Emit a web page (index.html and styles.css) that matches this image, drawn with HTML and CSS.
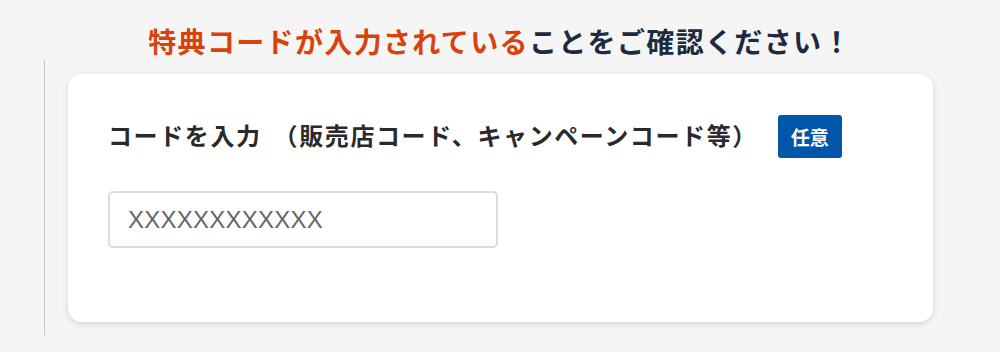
FILE: index.html
```html
<!DOCTYPE html>
<html lang="ja">
<head>
    <meta charset="UTF-8">
    <meta name="viewport" content="width=device-width, initial-scale=1.0">
    <title>特典コード入力</title>
    <link rel="stylesheet" href="styles.css">
</head>
<body>

    <h1 class="notice"><span class="accent">特典コードが入力されている</span>ことをご確認ください！</h1>

    <div class="section">
        <div class="card">
            <div class="field-head">
                <label class="field-label" for="codeInput">コードを入力<span class="note">（販売店コード、キャンペーンコード等）</span></label>
                <span class="badge">任意</span>
            </div>
            <input class="code-input" id="codeInput" type="text" placeholder="XXXXXXXXXXXX">
        </div>
    </div>

</body>
</html>
```

FILE: styles.css
```css
body {
    margin: 0;
    background: #f5f5f5;
    font-family: "Noto Sans CJK JP", "Noto Sans", sans-serif;
}
.notice {
    margin: 22px 0 0;
    font-size: 28px;
    line-height: 38px;
    font-weight: bold;
    letter-spacing: 1.35px;
    text-align: center;
    color: #1c2b40;
}
.accent {
    color: #d9420b;
}
.section {
    margin: 0 0 0 44px;
    padding: 14px 0 13px 23px;
    border-left: 1px solid #c8c8c8;
    width: 865px;
}
.card {
    background: #fff;
    border-radius: 14px;
    padding: 41px 40px 74px;
    box-shadow: 0 2px 6px rgba(0, 0, 0, 0.13);
}
.field-head {
    display: flex;
    align-items: center;
    gap: 20px;
}
.field-label {
    margin-bottom: 5px;
    font-size: 24px;
    font-weight: bold;
    letter-spacing: 1.6px;
    color: #2a2a2a;
}
.note {
    margin-left: 12px;
}
.badge {
    background: #0056a8;
    color: #fff;
    font-size: 19px;
    font-weight: bold;
    line-height: 43px;
    padding: 0 13px;
    border-radius: 3px;
}
.code-input {
    display: block;
    margin-top: 33px;
    box-sizing: border-box;
    width: 390px;
    height: 57px;
    padding: 0 18px;
    border: 2px solid #dcdcdc;
    border-radius: 5px;
    font-family: "Liberation Sans", Arial, sans-serif;
    font-size: 24px;
    letter-spacing: 0.25px;
    color: #333;
}
.code-input::placeholder {
    color: #666;
}
```
